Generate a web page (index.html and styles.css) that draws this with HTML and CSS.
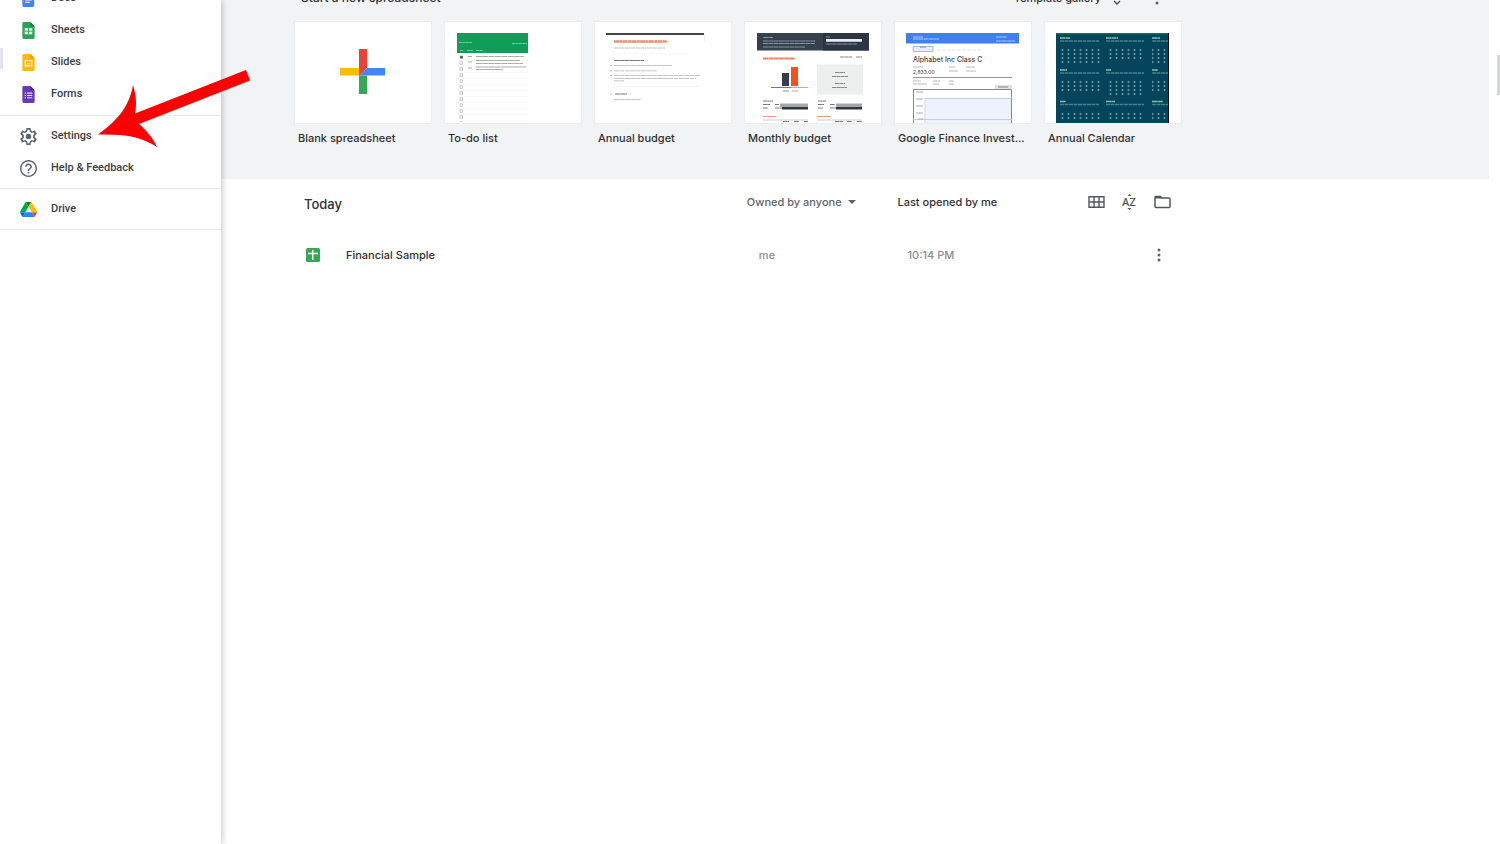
FILE: index.html
```html
<!DOCTYPE html>
<html lang="en">
<head>
<meta charset="utf-8">
<title>Sheets</title>
<link rel="stylesheet" href="styles.css">
</head>
<body>
<div class="app">
  <aside class="drawer">
    <nav class="drawer-nav" aria-label="Main menu">
      <div class="drawer-group drawer-group-apps">
        <a class="drawer-link" href="#docs">
          <svg class="drawer-icon" viewBox="0 0 18 18"><path fill="#4285f4" d="M4 0h7l4 4v12.500a1.500 1.500 0 0 1-1.500 1.500h-9.500a1.500 1.500 0 0 1-1.500-1.500v-15A1.500 1.500 0 0 1 4 0z"/><path stroke="#fff" stroke-width="1.200" d="M5.500 8h7M5.500 10.500h7M5.500 13h5"/></svg>
          <span>Docs</span></a>
        <a class="drawer-link" href="#sheets">
          <svg class="drawer-icon" viewBox="0 0 18 18"><path fill="#2fa257" d="M4 0h7l4.500 4.500v12a1.500 1.500 0 0 1-1.500 1.500H4a1.500 1.500 0 0 1-1.500-1.500v-15A1.500 1.500 0 0 1 4 0z"/><path fill="#188043" d="M11 0l4.500 4.500H11z"/><path fill="#e9f6ed" d="M5 6.500h8v6.500H5z"/><path stroke="#2fa257" d="M5 9.700h8M9 6.500v6.500"/></svg>
          <span>Sheets</span></a>
        <a class="drawer-link" href="#slides">
          <svg class="drawer-icon" viewBox="0 0 18 18"><path fill="#fbbc05" d="M4 0h7l4.500 4.500v12a1.500 1.500 0 0 1-1.500 1.500H4a1.500 1.500 0 0 1-1.500-1.500v-15A1.500 1.500 0 0 1 4 0z"/><path fill="#f09a00" d="M11 0l4.500 4.500H11z"/><path fill="none" stroke="#fff2c4" stroke-width="1.300" d="M5.500 7h7v5.500h-7z"/><path stroke="#fff2c4" d="M7 10.500h4"/></svg>
          <span>Slides</span></a>
        <a class="drawer-link" href="#forms">
          <svg class="drawer-icon" viewBox="0 0 18 18"><path fill="#673ab7" d="M4 0h7l4.500 4.500v12a1.500 1.500 0 0 1-1.500 1.500H4a1.500 1.500 0 0 1-1.500-1.500v-15A1.500 1.500 0 0 1 4 0z"/><path fill="#472a91" d="M11 0l4.500 4.500H11z"/><path stroke="#e7def7" stroke-width="1.200" d="M7.500 7.500H13M7.500 10H13M7.500 12.500H13M5 7.500h1.300M5 10h1.300M5 12.500h1.300"/></svg>
          <span>Forms</span></a>
      </div>
      <div class="drawer-group">
        <a class="drawer-link" href="#settings">
          <svg class="drawer-icon" viewBox="2 2 20 20"><path fill="#5f6368" d="M19.430 12.980c.04-.32.070-.64.070-.98s-.03-.66-.07-.98l2.110-1.650c.19-.15.240-.42.120-.64l-2-3.460c-.12-.22-.39-.3-.61-.22l-2.490 1c-.52-.4-1.080-.73-1.690-.98l-.38-2.650C14.460 2.180 14.250 2 14 2h-4c-.25 0-.46.18-.49.42l-.38 2.650c-.61.25-1.170.59-1.690.98l-2.490-1c-.23-.09-.49 0-.61.220l-2 3.460c-.13.22-.07.49.12.64l2.110 1.650c-.04.32-.07.650-.07.980s.03.66.07.98l-2.110 1.650c-.19.15-.24.42-.12.64l2 3.460c.12.22.39.3.61.22l2.490-1c.52.4 1.080.73 1.690.98l.38 2.650c.03.24.24.42.49.42h4c.25 0 .46-.18.49-.42l.38-2.650c.61-.25 1.170-.59 1.690-.98l2.490 1c.23.09.49 0 .61-.22l2-3.460c.12-.22.070-.49-.12-.64zM17.300 13.600l1.800 1.400-1.100 1.900-2.100-.85c-.8.650-1.500 1.100-2.400 1.400L13.170 20h-2.340l-.33-2.550c-.9-.3-1.600-.75-2.400-1.400L6 16.900 4.900 15l1.800-1.400c-.25-1.100-.25-2.100 0-3.200L4.900 9 6 7.100l2.100.85c.8-.65 1.500-1.100 2.400-1.400L10.830 4h2.340l.33 2.550c.9.300 1.600.75 2.400 1.400L18 7.100 19.100 9l-1.800 1.400c.25 1.100.25 2.100 0 3.200z"/><circle cx="12" cy="12" r="3.200" fill="#5f6368"/></svg>
          <span>Settings</span></a>
        <a class="drawer-link" href="#help">
          <svg class="drawer-icon" viewBox="2 2 20 20"><path fill="#5f6368" d="M11 18h2v-2h-2v2zm1-16C6.480 2 2 6.480 2 12s4.480 10 10 10 10-4.480 10-10S17.520 2 12 2zm0 18.300c-4.600 0-8.300-3.700-8.300-8.300S7.400 3.700 12 3.700s8.300 3.700 8.300 8.300-3.700 8.300-8.300 8.300zM12 6c-2.210 0-4 1.790-4 4h1.800c0-1.200 1-2.200 2.200-2.200s2.200 1 2.200 2.200c0 2-3.100 1.750-3.100 5h1.800c0-2.250 3.100-2.500 3.100-5 0-2.210-1.790-4-4-4z"/></svg>
          <span>Help &amp; Feedback</span></a>
      </div>
      <div class="drawer-group">
        <a class="drawer-link" href="#drive">
          <svg class="drawer-icon" viewBox="0 0 87 78"><path fill="#0066da" d="m6.600 66.850 3.850 6.650c.8 1.400 1.950 2.500 3.300 3.300L27.500 53H0c0 1.550.4 3.100 1.200 4.500z"/><path fill="#00ac47" d="M43.650 25 29.900 1.200c-1.350.8-2.500 1.900-3.300 3.300L1.200 48.500A9 9 0 0 0 0 53h27.500z"/><path fill="#ea4335" d="M73.550 76.800c1.350-.8 2.500-1.900 3.300-3.300l9.250-16c.8-1.400 1.200-2.950 1.200-4.500H59.800l5.850 11.500z"/><path fill="#00832d" d="M43.650 25 57.400 1.200C56.050.4 54.500 0 52.900 0H34.400c-1.600 0-3.150.45-4.500 1.200z"/><path fill="#2684fc" d="M59.800 53H27.500L13.750 76.800c1.350.8 2.900 1.200 4.500 1.200h50.800c1.600 0 3.150-.45 4.500-1.200z"/><path fill="#ffba00" d="m73.400 26.500-12.700-22c-.8-1.400-1.950-2.500-3.300-3.300L43.650 25 59.800 53h27.450c0-1.550-.4-3.100-1.200-4.500z"/></svg>
          <span>Drive</span></a>
      </div>
    </nav>
  </aside>

  <main class="main">
    <section class="templates">
      <div class="content">
        <header class="templates-head">
          <h2 class="templates-title">Start a new spreadsheet</h2>
          <div class="templates-actions">
            <button class="gallery-button" type="button">Template gallery
              <svg class="gallery-chevrons" viewBox="0 0 8 14"><path fill="none" stroke="#444" stroke-width="1.300" d="M1 4l3-3 3 3M1 10l3 3 3-3"/></svg></button>
            <button class="icon-button" type="button" aria-label="More options"><svg class="dots" viewBox="0 0 4 14"><circle cx="2" cy="2" r="1.500"/><circle cx="2" cy="7" r="1.500"/><circle cx="2" cy="12" r="1.500"/></svg></button>
          </div>
        </header>
        <div class="template-grid">
          <a class="template" href="#blank">
            <svg class="thumb" viewBox="0 0 136 101"><path fill="#ea4335" d="M64 27h8v19l-8 8z"/><path fill="#fbbc04" d="M45 46h19v7.500H45z"/><path fill="#34a853" d="M64 53.500h8V72h-8z"/><path fill="#4285f4" d="M72 46h18v7.500H64z"/></svg>
            <span class="template-name">Blank spreadsheet</span></a>
          <a class="template" href="#todo">
            <svg class="thumb" viewBox="0 0 136 101">
              <defs><pattern id="checks" x="14" y="33" width="6" height="6" patternUnits="userSpaceOnUse"><path fill="none" stroke="#bbb" stroke-width=".8" d="M1 .8h2.500v2.500H1z"/></pattern>
              <pattern id="rules" width="8" height="6" y="33" patternUnits="userSpaceOnUse"><path stroke="#f7f7f7" d="M0 5.500h8"/></pattern></defs>
              <path fill="#119d58" d="M12 11h71v20H12z"/>
              <path stroke="#74cc9d" stroke-width="1.200" stroke-dasharray="3 .4" d="M14 20.500h13M67 21.500h15M15 28.500h3M22 28.500h6M31 28.500h7"/>
              <path fill="url(#rules)" d="M12 33h71v66H12z"/><path fill="url(#checks)" d="M14 33h6v67h-6z"/>
              <path fill="#666" d="M15 34h3v2.500h-3z"/>
              <path stroke="#a8b0a6" stroke-width="1.200" stroke-dasharray="6 .3" d="M23 34.500h4M31 34.500h48M23 40h4M31 38.500h44M31 41.500h47M23 46h4M31 45h50M31 47.500h27"/></svg>
            <span class="template-name">To-do list</span></a>
          <a class="template" href="#annual-budget">
            <svg class="thumb" viewBox="0 0 136 101">
              <path fill="#444" d="M11 11h98v2H11z"/><path fill="none" stroke="#eee" d="M109.500 13v6"/>
              <path stroke="#f08a70" stroke-width="2.500" stroke-dasharray="5 .4 3 .3" d="M19 19.500h53"/>
              <path stroke="#c4c4c4" stroke-dasharray="5 .4" d="M19 26h51M19 43.500h58M19 48.800h43M19 53.500h86M19 56.500h82M19 58.800h10M19 77.500h27"/>
              <path stroke="#777" stroke-width="1.200" stroke-dasharray="5 .3" d="M19 38.500h30M20 72h12"/>
              <path stroke="#eee" stroke-dasharray="1 1" d="M19 32h74M19 64.500h85"/><path stroke="#bbb" d="M15 43.500h2M15 48.800h2M15 53.500h2M15 72h2"/></svg>
            <span class="template-name">Annual budget</span></a>
          <a class="template" href="#monthly-budget">
            <svg class="thumb" viewBox="0 0 136 101">
              <path fill="#35414f" d="M12 11h112v17.500H12z"/><path fill="#2b3543" d="M78 11h46v17.500H78z"/>
              <path fill="#e9edf1" d="M81 17h36v2.800H81z"/>
              <path stroke="#8793a0" stroke-dasharray="5 .3" d="M18 15.500h10M18 19h52M18 21.500h52M18 25h42M81 15h4M81 22h31"/>
              <path stroke="#f0845f" stroke-width="2.200" stroke-dasharray="5 .3" d="M18 36.500h32"/>
              <path fill="#30404c" d="M37 51h7v13h-7z"/><path fill="#f4511e" d="M46 45h7v19h-7z"/>
              <path stroke="#777" d="M26 65.500h20"/><path stroke="#f19a7c" d="M46 65.500h17"/>
              <path fill="#edefef" d="M72 42.500h46v30H72z"/>
              <path stroke="#888" stroke-width="1.200" stroke-dasharray="4 .3" d="M95 35h12M111 35h6M90 50.500h10M87 54.500h16M90 61.500h10M87 65.500h15M38 69h6"/>
              <path stroke="#f19a7c" d="M47 69h6M18 94.500h13M72 94.500h14"/>
              <path fill="#a3a7aa" d="M35 81.500h28V85H35zM91 81.500h26V85H91z"/><path fill="#2e3742" d="M37 85h26v2.500H37zM91 85h26v2.500H91z"/>
              <path stroke="#777" stroke-width="1.200" stroke-dasharray="4 .3" d="M18 79h10M18 82.500h7M18 86h5M30 82.500h4M30 86h7M73 79h8M73 82.500h6M73 86h5M85 82.500h5M85 86h6M38 99.500h6M49 99.500h5M59 99.500h4M90 99.500h8M102 99.500h5M112 99.500h5"/>
              <path stroke="#aaa" stroke-width=".6" d="M18 98h45M72 98h45"/></svg>
            <span class="template-name">Monthly budget</span></a>
          <a class="template" href="#finance">
            <svg class="thumb" viewBox="0 0 136 101">
              <path fill="#3f80ee" d="M11 11h113v10.500H11z"/><path stroke="#a9c7fa" stroke-dasharray="5 .3" d="M18 15h10M18 17h26M101 15h11M101 19h19"/>
              <path fill="#e7edfc" stroke="#8daaf0" stroke-width=".8" d="M18 24.500h20v5H18z"/><path stroke="#789" d="M25 25h6"/>
              <path stroke="#e6e6e6" stroke-dasharray="4 1" d="M42 28h44"/>
              <text class="thumb-title" x="18" y="40">Alphabet Inc Class C</text><text class="thumb-value" x="18" y="52">2,833.00</text>
              <path stroke="#b5b5b5" stroke-width="1.200" stroke-dasharray="4 .3" d="M18 45h10M54 45h6M54 49h9M71 45h9M71 49h10M18 59h8M18 62h14M38 59h7M38 62h6M54 59h5M54 62h5"/>
              <path stroke="#999" d="M18 55.500h99"/>
              <path fill="#dfe1e3" d="M100 63h17v4h-17z"/><path stroke="#888" d="M103 65h10"/>
              <path fill="#eef2fc" d="M31 76h86v25H31z"/><path fill="none" stroke="#888" d="M18.500 101V67.500h98V101"/>
              <path stroke="#b8c4df" stroke-width=".8" d="M30 76.500h87M30 76v25M18 97.500h99"/><path stroke="#aaa" d="M21 70h7M21 77h7M21 84h7M21 91h7M23 97h5"/></svg>
            <span class="template-name">Google Finance Invest...</span></a>
          <a class="template" href="#calendar">
            <svg class="thumb" viewBox="0 0 136 101">
              <defs><pattern id="days" x="15" y="26" width="6" height="4" patternUnits="userSpaceOnUse"><circle cx="2.500" cy="2" r="1" fill="#75a0ae"/></pattern></defs>
              <path fill="#04455c" d="M11 11h113v90H11z"/><path fill="#087060" d="M11 11h113v1.500H11z"/><path fill="#111" d="M123 11h1v90h-1z"/>
              <path stroke="#87bda7" stroke-width="1.500" stroke-dasharray="5 .3" d="M15 16h10M61 16h12M107 16h8M15 48h7M61 48h5M107 48h6M15 79.500h6M61 79.500h9M107 79.500h11"/>
              <path stroke="#467e90" stroke-width="1.500" stroke-dasharray="4 .5" d="M15 19h39M61 19h38M107 19h16M15 51h39M61 51h38M107 51h16M15 82.500h39M61 82.500h38M107 82.500h16"/>
              <path fill="url(#days)" d="M15 26h40v16H15zM61 26h39v12H61zM107 26h16v16h-16zM15 58h40v12H15zM61 58h39v16H61zM107 58h16v12h-16zM15 90h40v9H15zM61 90h39v9H61zM107 90h16v9h-16z"/></svg>
            <span class="template-name">Annual Calendar</span></a>
        </div>
      </div>
    </section>

    <section class="content">
      <table class="files">
        <colgroup><col class="col-name"><col class="col-owner"><col class="col-opened"><col class="col-tools"></colgroup>
        <thead>
          <tr>
            <th class="files-period" scope="col">Today</th>
            <th scope="col"><button class="owner-button" type="button">Owned by anyone <svg class="caret" viewBox="0 0 8 4"><path fill="#5f6368" d="M0 0h8L4 4z"/></svg></button></th>
            <th scope="col">Last opened by me</th>
            <th>
              <div class="tools">
                <button class="icon-button" type="button" aria-label="Grid view"><svg class="tool-icon" viewBox="0 0 17 16"><path fill="none" stroke="#54575a" stroke-width="1.400" d="M1 2.700h15v10.600H1zM1 8h15M6 2.700v10.600M11 2.700v10.600"/></svg></button>
                <button class="icon-button" type="button" aria-label="Sort options"><svg class="tool-icon" viewBox="0 0 17 16"><text class="sort-letters" x="8" y="12" text-anchor="middle">AZ</text><path fill="#54575a" d="M6.500 2L8.500 0l2 2zM6.500 14h4l-2 2z"/></svg></button>
                <button class="icon-button" type="button" aria-label="Open file picker"><svg class="tool-icon" viewBox="0 0 17 16"><path fill="none" stroke="#54575a" stroke-width="1.500" stroke-linejoin="round" d="M1 3v9.500q0 1 1 1h13q1 0 1-1V5q0-1-1-1H8L6.500 2.500H2Q1 2.500 1 3.500z"/><path fill="#54575a" d="M1 2.500h5.500L8 4.500H1z"/></svg></button>
              </div>
            </th>
          </tr>
        </thead>
        <tbody>
          <tr>
            <td class="file-cell">
              <a class="file-link" href="#financial-sample"><svg class="file-icon" viewBox="0 0 14 14"><rect width="14" height="14" rx="1.500" fill="#34a853"/><path stroke="#fff" stroke-width="1.500" d="M2 5.500h10M6.700 2v10"/></svg>
              <span>Financial Sample</span></a></td>
            <td class="file-owner">me</td>
            <td class="file-time">10:14 PM</td>
            <td><div class="row-tools"><button class="icon-button" type="button" aria-label="File actions"><svg class="dots" viewBox="0 0 4 14"><circle cx="2" cy="2" r="1.500"/><circle cx="2" cy="7" r="1.500"/><circle cx="2" cy="12" r="1.500"/></svg></button></div></td>
          </tr>
        </tbody>
      </table>
    </section>
  </main>
  <div class="scrollbar"></div>
</div>
<svg class="arrow" viewBox="0 0 152 77" aria-hidden="true"><path fill="#fe0000" d="M0 64.500C16 53 31 39 35 15c3 10 4 19 2 28.500L148 0l4 10.500L41 54c7 6 14 14 18 23C43 66 25 64 0 64.500z"/></svg>
</body>
</html>
```
FILE: styles.css
```css
* {
  box-sizing: border-box;
}

body {
  margin: 0;
  overflow: hidden;
  background: #fff;
  color: #303134;
  font: 500 11px/16px Inter, "Liberation Sans", sans-serif;
}

a {
  color: inherit;
  text-decoration: none;
}

button {
  padding: 0;
  border: 0;
  background: none;
  color: inherit;
  font: inherit;
  cursor: pointer;
}

.app {
  display: flex;
  min-height: 100vh;
}

.drawer {
  position: relative;
  z-index: 1;
  flex: 0 0 221px;
  background: #fff;
  box-shadow: 0 0 7px rgba(0, 0, 0, 0.3);
}

.drawer::before {
  content: "";
  position: absolute;
  top: 48px;
  left: 0;
  width: 3px;
  height: 21px;
  background: #e6e1f5;
}

.drawer-nav {
  margin-top: -22px;
}

.drawer-group {
  padding: 4px 0;
  border-bottom: 1px solid #ececec;
}

.drawer-group-apps {
  padding-bottom: 5px;
}

.drawer-link {
  display: flex;
  align-items: center;
  gap: 14px;
  height: 32px;
  padding-left: 20px;
  color: #3c4043;
  font-family: Roboto, sans-serif;
}

.drawer-icon {
  width: 17px;
  height: 17px;
}

.main {
  flex: 1;
  min-width: 0;
}

.templates {
  padding-bottom: 33px;
  background: #f1f3f4;
}

.content {
  max-width: 960px;
  padding-left: 74px;
}

.templates-head {
  display: flex;
  align-items: center;
  justify-content: space-between;
  height: 32px;
  margin-top: -18px;
  padding: 0 22px 0 6px;
}

.templates-title {
  margin: 0;
  font-size: 12px;
  font-weight: 500;
}

.templates-actions {
  display: flex;
  align-items: center;
  gap: 34px;
}

.gallery-button {
  display: flex;
  align-items: center;
  gap: 12px;
}

.gallery-chevrons {
  width: 8px;
  height: 14px;
}

.icon-button {
  display: flex;
}

.dots {
  width: 4px;
  height: 14px;
  fill: #5f6368;
}

.template-grid {
  display: grid;
  grid-template-columns: repeat(6, minmax(0, 1fr));
  gap: 14px;
  padding-top: 8px;
}

.template {
  display: flex;
  flex-direction: column;
  gap: 7px;
}

.thumb {
  width: 100%;
  background: #fff;
  outline: 1px solid #ebecee;
}

.thumb-title {
  fill: #444;
  font: 500 7px Inter, sans-serif;
}

.thumb-value {
  fill: #555;
  font: 500 5px Inter, sans-serif;
}

.template-name {
  overflow: hidden;
  padding-left: 3px;
  text-overflow: ellipsis;
  white-space: nowrap;
}

.files {
  width: 100%;
  border-collapse: collapse;
  table-layout: fixed;
}

.files th,
.files td {
  padding: 0;
  text-align: left;
  font-weight: 500;
}

.files th {
  height: 46px;
}

.files td {
  height: 60px;
}

.col-name {
  width: 51%;
}

.col-owner {
  width: 17%;
}

.col-opened {
  width: 21%;
}

.files .files-period {
  padding: 4px 0 0 9px;
  font-size: 13px;
}

.owner-button {
  display: flex;
  align-items: center;
  gap: 6px;
  color: #5f6368;
}

.caret {
  width: 8px;
  height: 4px;
}

.tools {
  display: flex;
  justify-content: flex-end;
  gap: 16px;
  padding-right: 10px;
}

.tool-icon {
  width: 17px;
  height: 16px;
}

.sort-letters {
  fill: #54575a;
  font: 500 11px Roboto, sans-serif;
}

.file-link {
  display: flex;
  align-items: center;
  gap: 26px;
  padding-left: 11px;
}

.file-icon {
  width: 14px;
  height: 14px;
}

.files .file-owner {
  padding-left: 12px;
  color: #8a8d91;
}

.files .file-time {
  padding-left: 10px;
  color: #8a8d91;
}

.row-tools {
  display: flex;
  justify-content: flex-end;
  padding-right: 20px;
}

.scrollbar {
  flex: 0 0 11px;
  padding: 55px 0 0 8px;
}

.scrollbar::before {
  content: "";
  display: block;
  height: 40px;
  background: #d5d6d8;
}

.arrow {
  position: absolute;
  z-index: 2;
  top: 70px;
  left: 98px;
  width: 152px;
  height: 77px;
}
```
